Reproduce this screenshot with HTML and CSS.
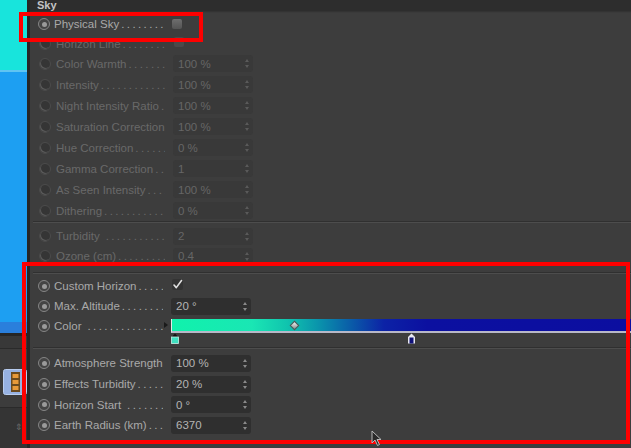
FILE: index.html
```html
<!DOCTYPE html>
<html>
<head>
<meta charset="utf-8">
<link rel="stylesheet" href="styles.css">
</head>
<body>
<div class="app">
  <div class="viewport">
    <div class="vp-cyan"></div>
    <div class="vp-line"></div>
    <div class="vp-blue"></div>
    <div class="vp-blue-dark"></div>
    <div class="vp-gap"></div>
    <div class="vp-bar"></div>
    <div class="vp-icons">
      <div class="film">
        <svg width="24" height="26" viewBox="0 0 24 26">
          <rect x="0.5" y="0.5" width="23" height="25" rx="2" fill="#97b2e2" stroke="#b8cdf0"/>
          <rect x="8" y="3" width="9" height="20" fill="#6b4a1e"/>
          <rect x="9.5" y="5" width="6" height="4" fill="#e89a3a"/>
          <rect x="9.5" y="11" width="6" height="4" fill="#e89a3a"/>
          <rect x="9.5" y="17" width="6" height="4" fill="#e89a3a"/>
        </svg>
      </div>
    </div>
    <div class="vp-bottom"><span class="vp-arrows">&#8661;</span></div>
  </div>
  <div class="divider"></div>
  <div class="panel">
    <div class="header">Sky</div>

    <div class="group g1">
      <div class="row row-check">
        <span class="radio on"></span>
        <span class="label on"><span class="name">Physical Sky</span><span class="dots"></span></span>
        <span class="checkbox"></span>
      </div>
      <div class="row row-check short">
        <span class="radio"></span>
        <span class="label"><span class="name">Horizon Line</span><span class="dots"></span></span>
        <span class="checkbox dim"></span>
      </div>
      <div class="row"><span class="radio"></span><span class="label"><span class="name">Color Warmth</span><span class="dots"></span></span><span class="field">100 %<i class="arr"></i></span></div>
      <div class="row"><span class="radio"></span><span class="label"><span class="name">Intensity</span><span class="dots"></span></span><span class="field">100 %<i class="arr"></i></span></div>
      <div class="row"><span class="radio"></span><span class="label"><span class="name">Night Intensity Ratio</span><span class="dots"></span></span><span class="field">100 %<i class="arr"></i></span></div>
      <div class="row"><span class="radio"></span><span class="label"><span class="name">Saturation Correction</span><span class="dots"></span></span><span class="field">100 %<i class="arr"></i></span></div>
      <div class="row"><span class="radio"></span><span class="label"><span class="name">Hue Correction</span><span class="dots"></span></span><span class="field">0 %<i class="arr"></i></span></div>
      <div class="row"><span class="radio"></span><span class="label"><span class="name">Gamma Correction</span><span class="dots"></span></span><span class="field">1<i class="arr"></i></span></div>
      <div class="row"><span class="radio"></span><span class="label"><span class="name">As Seen Intensity</span><span class="dots"></span></span><span class="field">100 %<i class="arr"></i></span></div>
      <div class="row"><span class="radio"></span><span class="label"><span class="name">Dithering</span><span class="dots"></span></span><span class="field">0 %<i class="arr"></i></span></div>
    </div>
    <div class="sep"></div>

    <div class="group g2">
      <div class="row r20"><span class="radio"></span><span class="label"><span class="name">Turbidity</span><span class="dots wide"></span></span><span class="field">2<i class="arr"></i></span></div>
      <div class="row r20"><span class="radio"></span><span class="label"><span class="name">Ozone (cm)</span><span class="dots"></span></span><span class="field">0.4<i class="arr"></i></span></div>
    </div>
    <div class="sep"></div>

    <div class="group g3">
      <div class="row r20">
        <span class="radio on"></span>
        <span class="label on"><span class="name">Custom Horizon</span><span class="dots"></span></span>
        <span class="checked">
          <svg width="11" height="11" viewBox="0 0 11 11"><path d="M2 6 L4.3 8.6 L9.5 1.5" fill="none" stroke="#e0e0e0" stroke-width="1.6" stroke-linecap="round" stroke-linejoin="round"/></svg>
        </span>
      </div>
      <div class="row r20"><span class="radio on"></span><span class="label on"><span class="name">Max. Altitude</span><span class="dots"></span></span><span class="field on">20 °<i class="arr on"></i></span></div>
      <div class="row color-row">
        <span class="radio on"></span>
        <span class="label on"><span class="name">Color</span><span class="dots wide"></span></span>
        <span class="gradient">
          <span class="tri"></span>
          <span class="knob"></span>
        </span>
      </div>
      <div class="markers">
        <span class="mk mk-green">
          <svg width="8" height="11" viewBox="0 0 8 11"><path d="M1 4 L4 0.5 L7 4 Z" fill="#111"/><rect x="0.5" y="4" width="7" height="6.5" fill="#3fe0c0" stroke="#c8f0e8" stroke-width="0.8"/></svg>
        </span>
        <span class="mk mk-blue">
          <svg width="9" height="11" viewBox="0 0 9 11"><path d="M1 4 L4.5 0.5 L8 4 L8 10.5 L1 10.5 Z" fill="#e8e8f0"/><rect x="2.5" y="4.5" width="4" height="6" fill="#10127a"/></svg>
        </span>
      </div>
    </div>
    <div class="sep"></div>

    <div class="group g4">
      <div class="row r21"><span class="radio on"></span><span class="label on"><span class="name">Atmosphere Strength</span><span class="dots"></span></span><span class="field on">100 %<i class="arr on"></i></span></div>
      <div class="row r21"><span class="radio on"></span><span class="label on"><span class="name">Effects Turbidity</span><span class="dots"></span></span><span class="field on">20 %<i class="arr on"></i></span></div>
      <div class="row r21"><span class="radio on"></span><span class="label on"><span class="name">Horizon Start</span><span class="dots wide"></span></span><span class="field on">0 °<i class="arr on"></i></span></div>
      <div class="row r21"><span class="radio on"></span><span class="label on"><span class="name">Earth Radius (km)</span><span class="dots"></span></span><span class="field on">6370<i class="arr on"></i></span></div>
    </div>
  </div>

  <div class="mark mark-1"></div>
  <div class="mark mark-2"></div>
  <svg class="cursor" width="12" height="17" viewBox="0 0 12 17">
    <path d="M1 1 L1 13 L4 10 L6.5 15.5 L8.5 14.5 L6 9.5 L10 9.5 Z" fill="#2a2a2a" stroke="#b8b8b8" stroke-width="1"/>
  </svg>
</div>
</body>
</html>
```

FILE: styles.css
```css
html, body {
  margin: 0;
  padding: 0;
}
body {
  width: 631px;
  height: 448px;
  overflow: hidden;
  background: #3d3d3d;
  font-family: "Liberation Sans", Arial, sans-serif;
  font-size: 11.5px;
}
.app {
  position: relative;
  display: flex;
  width: 631px;
  height: 448px;
}

/* left viewport strip */
.viewport {
  width: 27px;
  display: flex;
  flex-direction: column;
  flex-shrink: 0;
}
.vp-cyan { height: 70px; background: #18e4dc; }
.vp-line { height: 2px; background: #5fc4f2; }
.vp-blue { height: 250px; background: #1d9ff2; }
.vp-blue-dark { height: 11px; background: #2a7fdc; }
.vp-gap { height: 3px; background: #262626; }
.vp-bar { height: 12px; background: #383838; border-bottom: 1px solid #2a2a2a; }
.vp-icons {
  height: 59px;
  background: #3c3c3c;
  border-bottom: 1px solid #2a2a2a;
  display: flex;
  align-items: flex-start;
  padding-top: 20px;
  box-sizing: border-box;
}
.film { margin-left: 3px; line-height: 0; }
.vp-bottom {
  flex: 1;
  background: #343434;
}
.vp-arrows {
  display: block;
  color: #6a6a6a;
  font-size: 9px;
  text-align: right;
  padding: 14px 4px 0 0;
}
.divider {
  width: 3px;
  background: #262626;
  flex-shrink: 0;
}

/* panel */
.panel {
  flex: 1;
  background: #3d3d3d;
  display: flex;
  flex-direction: column;
}
.header {
  height: 11px;
  background: #2d2d2d;
  box-shadow: 0 1px 1px #333;
  color: #c4c4c4;
  font-weight: bold;
  font-size: 11px;
  line-height: 10px;
  padding-left: 7px;
}
.group { display: flex; flex-direction: column; }
.g1 { padding-top: 3px; }
.g2 { padding-top: 3px; padding-bottom: 6px; }
.g3 { padding-top: 2px; }
.g4 { padding-top: 4px; }

.sep {
  height: 0;
  border-top: 1px solid #303030;
  border-bottom: 1px solid #4d4d4d;
  margin-left: 3px;
}

.row {
  height: 21px;
  display: flex;
  align-items: center;
  padding-left: 8px;
}
.row-check { height: 20px; }
.row-check.short { height: 19px; }
.r20 { height: 20px; }
.r21 { height: 20.7px; }

.radio {
  width: 10px;
  height: 10px;
  border-radius: 50%;
  border: 1px solid #4b4b4b;
  background: #353535;
  box-shadow: inset 1px -1px 0 #5a5a5a;
  flex-shrink: 0;
  margin: 0 5px 0 1px;
  position: relative;
}
.radio.on {
  border: 1.3px solid #868686;
  background: #444;
  box-shadow: none;
  margin: 0 4px 0 0;
}
.radio.on::after {
  content: "";
  position: absolute;
  left: 2.5px;
  top: 2.5px;
  width: 5px;
  height: 5px;
  border-radius: 50%;
  background: #9a9a9a;
}

.label {
  width: 117px;
  display: flex;
  color: #696969;
  white-space: nowrap;
  padding-right: 8px;
  box-sizing: border-box;
  flex-shrink: 0;
}
.label.on { color: #a9a9a9; }
.name { flex-shrink: 0; }
.dots {
  flex: 1;
  overflow: hidden;
  letter-spacing: 2.4px;
  padding-left: 2px;
}
.dots.wide { padding-left: 6px; }
.dots::before {
  content: "....................................";
}

.field {
  width: 80px;
  height: 17px;
  box-sizing: border-box;
  background: #393939;
  border-radius: 3px;
  color: #666;
  padding-left: 5px;
  display: flex;
  align-items: center;
  position: relative;
  flex-shrink: 0;
}
.field.on {
  background: #2f2f2f;
  color: #b4b4b4;
}
.arr {
  position: absolute;
  right: 3px;
  top: 4px;
  width: 5px;
  height: 9px;
}
.arr::before, .arr::after {
  content: "";
  position: absolute;
  left: 0;
  width: 0;
  height: 0;
  border-left: 2.5px solid transparent;
  border-right: 2.5px solid transparent;
}
.arr::before { top: 0; border-bottom: 3px solid #5a5a5a; }
.arr::after { bottom: 0; border-top: 3px solid #5a5a5a; }
.arr.on::before { border-bottom-color: #8a8a8a; }
.arr.on::after { border-top-color: #8a8a8a; }

.checkbox {
  width: 10px;
  height: 10px;
  border-radius: 2px;
  background: linear-gradient(#6e6e6e, #545454);
  margin-left: 1px;
  flex-shrink: 0;
}
.checkbox.dim { background: #4a4a4a; margin-top: -4px; }
.checked {
  width: 11px;
  height: 11px;
  line-height: 0;
  background: #333;
  border-radius: 2px;
  margin: -3px 0 0 1px;
}

/* gradient */
.color-row { height: 17px; align-items: flex-start; }
.color-row .radio, .color-row .label { margin-top: 4px; }
.gradient {
  flex: 1;
  height: 12px;
  margin-top: 3px;
  margin-right: -5px;
  position: relative;
  border-left: 1px solid #e8e8e8;
  border-bottom: 2px solid #b8b8c8;
  background: linear-gradient(to right,
    #10f2ac 0px,
    #1ae6b4 80px,
    #10c4ae 115px,
    #0a96ac 145px,
    #0a5aa8 180px,
    #0c22a6 212px,
    #0c10a0 255px,
    #0c0ea0 100%);
}
.tri {
  position: absolute;
  left: -8px;
  top: 3px;
  width: 0;
  height: 0;
  border-left: 4px solid #1a1a1a;
  border-top: 3px solid transparent;
  border-bottom: 3px solid transparent;
}
.knob {
  position: absolute;
  left: 119px;
  top: 3px;
  width: 5px;
  height: 5px;
  background: linear-gradient(135deg, #f4f4f4, #8a8a8a);
  transform: rotate(45deg);
  border: 0.5px solid #555;
}
.markers {
  height: 14px;
  display: flex;
  align-items: flex-start;
  padding-left: 141px;
}
.mk { line-height: 0; }
.mk-blue { margin-left: 228px; }

/* annotation overlays */
.mark {
  position: absolute;
  border: 4px solid #fe0000;
  box-sizing: border-box;
  pointer-events: none;
}
.mark-1 { left: 19px; top: 12px; width: 184px; height: 30px; }
.mark-2 { left: 22px; top: 262px; width: 608px; height: 182px; }
.cursor {
  position: absolute;
  left: 371px;
  top: 430px;
}
```
